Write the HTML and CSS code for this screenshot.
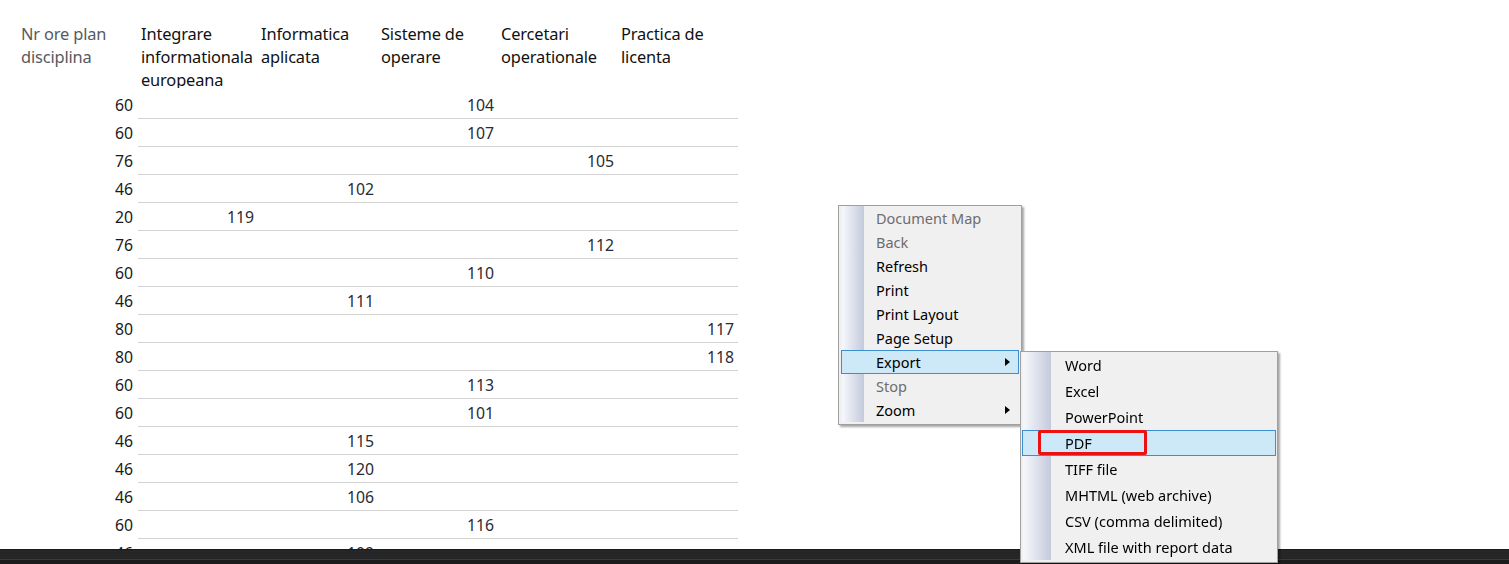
FILE: index.html
```html
<!DOCTYPE html>
<html>
<head>
<meta charset="utf-8">
<link rel="stylesheet" href="styles.css">
</head>
<body>
<div class="report">
  <table class="grid">
    <thead>
      <tr>
        <th class="c-first"><div class="hcell muted">Nr ore plan disciplina</div></th>
        <th><div class="hcell">Integrare informationala europeana</div></th>
        <th><div class="hcell">Informatica aplicata</div></th>
        <th><div class="hcell">Sisteme de operare</div></th>
        <th><div class="hcell">Cercetari operationale</div></th>
        <th><div class="hcell">Practica de licenta</div></th>
      </tr>
    </thead>
    <tbody>
      <tr><td class="c-first">60</td><td></td><td></td><td>104</td><td></td><td></td></tr>
      <tr><td class="c-first">60</td><td></td><td></td><td>107</td><td></td><td></td></tr>
      <tr><td class="c-first">76</td><td></td><td></td><td></td><td>105</td><td></td></tr>
      <tr><td class="c-first">46</td><td></td><td>102</td><td></td><td></td><td></td></tr>
      <tr><td class="c-first">20</td><td>119</td><td></td><td></td><td></td><td></td></tr>
      <tr><td class="c-first">76</td><td></td><td></td><td></td><td>112</td><td></td></tr>
      <tr><td class="c-first">60</td><td></td><td></td><td>110</td><td></td><td></td></tr>
      <tr><td class="c-first">46</td><td></td><td>111</td><td></td><td></td><td></td></tr>
      <tr><td class="c-first">80</td><td></td><td></td><td></td><td></td><td>117</td></tr>
      <tr><td class="c-first">80</td><td></td><td></td><td></td><td></td><td>118</td></tr>
      <tr><td class="c-first">60</td><td></td><td></td><td>113</td><td></td><td></td></tr>
      <tr><td class="c-first">60</td><td></td><td></td><td>101</td><td></td><td></td></tr>
      <tr><td class="c-first">46</td><td></td><td>115</td><td></td><td></td><td></td></tr>
      <tr><td class="c-first">46</td><td></td><td>120</td><td></td><td></td><td></td></tr>
      <tr><td class="c-first">46</td><td></td><td>106</td><td></td><td></td><td></td></tr>
      <tr><td class="c-first">60</td><td></td><td></td><td>116</td><td></td><td></td></tr>
      <tr><td class="c-first">46</td><td></td><td>109</td><td></td><td></td><td></td></tr>
    </tbody>
  </table>
</div>

<div class="taskbar"></div>

<div class="menu main-menu">
  <div class="gutter"></div>
  <ul class="items">
    <li class="item disabled">Document Map</li>
    <li class="item disabled">Back</li>
    <li class="item">Refresh</li>
    <li class="item">Print</li>
    <li class="item">Print Layout</li>
    <li class="item">Page Setup</li>
    <li class="item active has-sub">Export<span class="arrow"></span></li>
    <li class="item disabled">Stop</li>
    <li class="item has-sub">Zoom<span class="arrow"></span></li>
  </ul>
</div>

<div class="menu sub-menu">
  <div class="gutter"></div>
  <ul class="items">
    <li class="item">Word</li>
    <li class="item">Excel</li>
    <li class="item">PowerPoint</li>
    <li class="item active">PDF<span class="mark"></span></li>
    <li class="item">TIFF file</li>
    <li class="item">MHTML (web archive)</li>
    <li class="item">CSV (comma delimited)</li>
    <li class="item">XML file with report data</li>
  </ul>
</div>
</body>
</html>
```

FILE: styles.css
```css
html, body {
  margin: 0;
  padding: 0;
  background: #ffffff;
  overflow: hidden;
  height: 564px;
}

body {
  font-family: "Noto Sans", "Open Sans", sans-serif;
  color: #1a1a1a;
}

.report {
  padding: 22px 0 0 18px;
}

.grid {
  border-collapse: collapse;
  table-layout: fixed;
  font-size: 15.8px;
}

.grid th {
  width: 120px;
  padding: 0 0 3px 0;
  text-align: left;
  font-weight: normal;
  vertical-align: top;
}

.hcell {
  height: 66px;
  overflow: hidden;
  font-size: 16.4px;
  line-height: 23px;
  padding-left: 3px;
  color: #111;
  letter-spacing: -0.15px;
}

.hcell.muted {
  color: #555a60;
}

.grid td {
  height: 26px;
  padding: 1px 4px 0 0;
  text-align: right;
  border-bottom: 1px solid #d3d3d3;
  line-height: 26px;
  color: #2b2b33;
}

.grid td.c-first {
  border-bottom: none;
  padding-right: 5px;
  color: #1a1a1a;
}

/* context menus */
.menu {
  position: absolute;
  background: #f0f0f0;
  border: 1px solid #a0a0a0;
  box-shadow: 2px 2px 2px rgba(0, 0, 0, 0.35);
  font-size: 14.5px;
  color: #000;
}

.main-menu {
  left: 838px;
  top: 205px;
  width: 182px;
  padding: 0 0 2px 0;
}

.sub-menu {
  left: 1020px;
  top: 351px;
  width: 256px;
  padding: 0 0 2px 0;
}

.gutter {
  position: absolute;
  top: 0;
  bottom: 2px;
  background: linear-gradient(to right, #f7f8fc, #c4cadc);
}

.main-menu .gutter {
  left: 3px;
  width: 22px;
}

.sub-menu .gutter {
  left: 2px;
  width: 28px;
}

.items {
  list-style: none;
  margin: 0;
  padding: 0;
  position: relative;
}

.item {
  position: relative;
  box-sizing: border-box;
  border: 1px solid transparent;
}

.main-menu .item {
  height: 24px;
  line-height: 22px;
  margin: 0 2px 0 2px;
  padding-left: 34px;
}

.sub-menu .item {
  height: 26px;
  line-height: 24px;
  margin: 0 1px 0 1px;
  padding-left: 42px;
}

.item.disabled {
  color: #6d6d6d;
}

.item.active {
  background: #cde8f7;
  border-color: #3d8ed0;
}

.arrow {
  position: absolute;
  right: 8px;
  top: 7px;
  width: 0;
  height: 0;
  border-top: 4.5px solid transparent;
  border-bottom: 4.5px solid transparent;
  border-left: 5px solid #000;
}

.mark {
  position: absolute;
  left: 15px;
  top: -1px;
  width: 103px;
  height: 19px;
  border: 3px solid #ee1111;
  border-radius: 2px;
}

.taskbar {
  position: fixed;
  left: 0;
  right: 0;
  bottom: 0;
  height: 14px;
  background: #262626;
  border-top: 1px solid #1a1a1a;
  box-shadow: inset 0 -4px 0 #1c1c1c, inset 0 -5px 0 #3a3a3a;
}
```
